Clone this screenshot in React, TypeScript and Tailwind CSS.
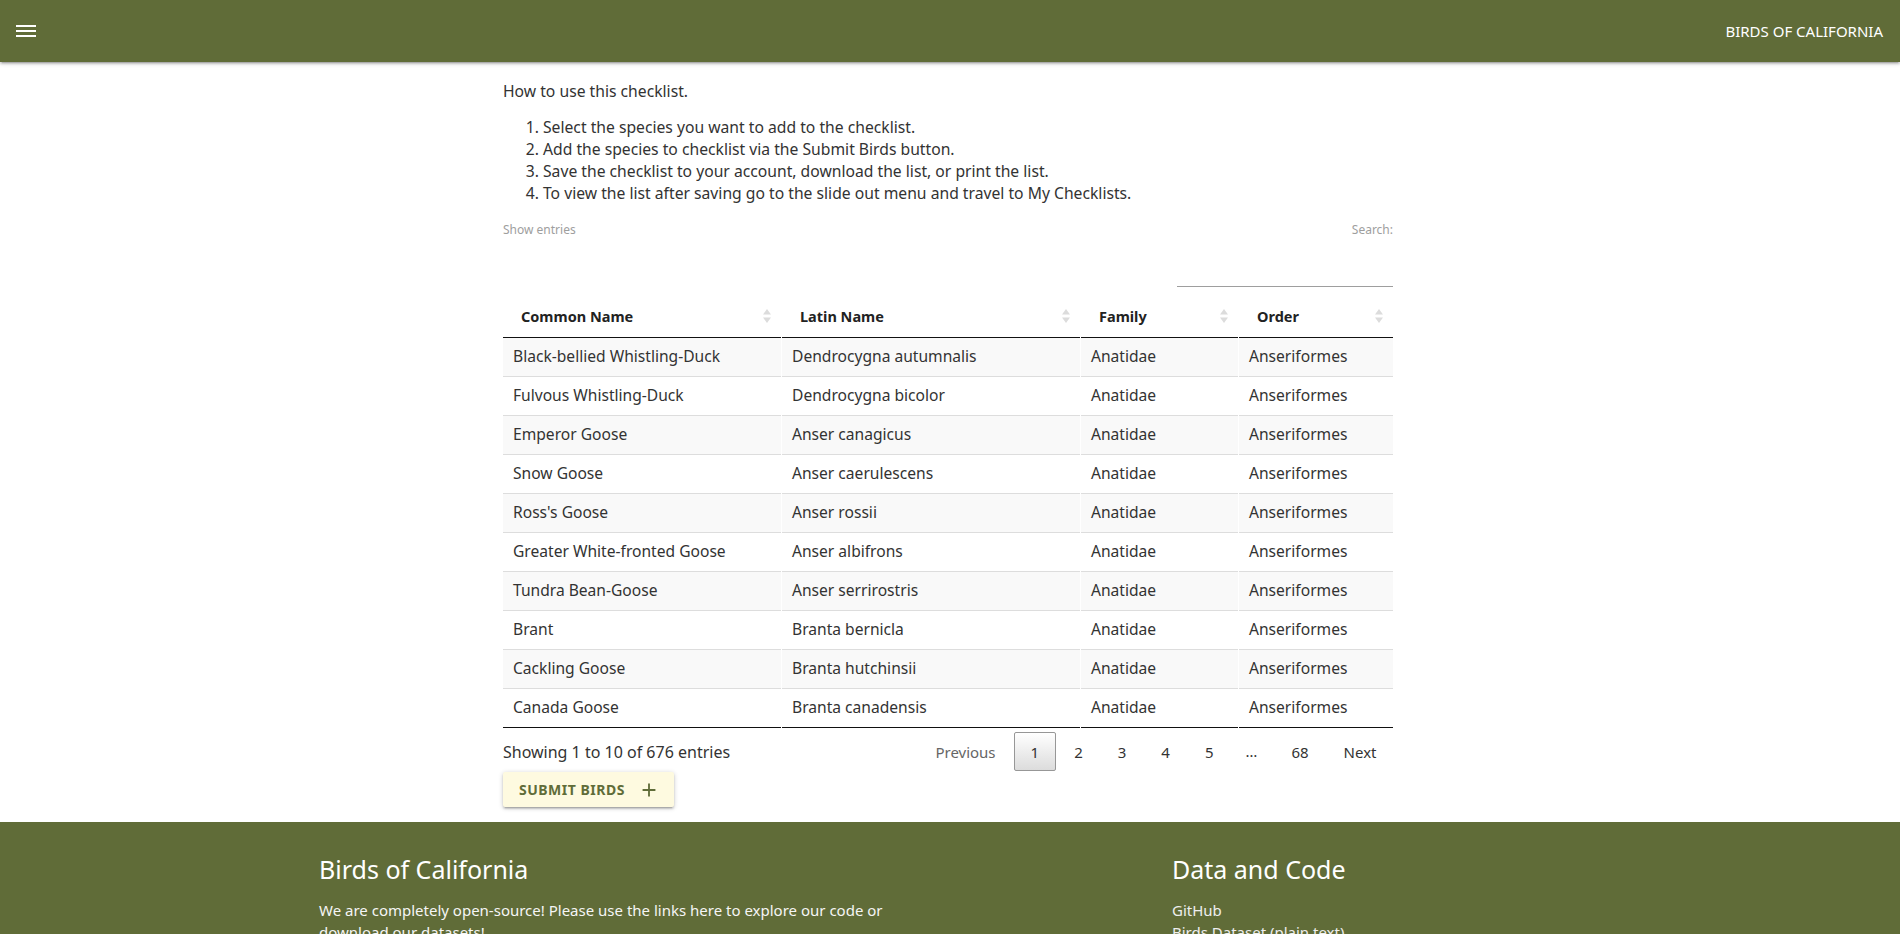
import React from "react";

const birds = [
  ["Black-bellied Whistling-Duck", "Dendrocygna autumnalis", "Anatidae", "Anseriformes"],
  ["Fulvous Whistling-Duck", "Dendrocygna bicolor", "Anatidae", "Anseriformes"],
  ["Emperor Goose", "Anser canagicus", "Anatidae", "Anseriformes"],
  ["Snow Goose", "Anser caerulescens", "Anatidae", "Anseriformes"],
  ["Ross's Goose", "Anser rossii", "Anatidae", "Anseriformes"],
  ["Greater White-fronted Goose", "Anser albifrons", "Anatidae", "Anseriformes"],
  ["Tundra Bean-Goose", "Anser serrirostris", "Anatidae", "Anseriformes"],
  ["Brant", "Branta bernicla", "Anatidae", "Anseriformes"],
  ["Cackling Goose", "Branta hutchinsii", "Anatidae", "Anseriformes"],
  ["Canada Goose", "Branta canadensis", "Anatidae", "Anseriformes"],
];

const headers = ["Common Name", "Latin Name", "Family", "Order"];

function SortIcon() {
  return (
    <svg width="8" height="14" viewBox="0 0 8 14" className="shrink-0">
      <polygon points="4,0 8,5.5 0,5.5" fill="#dcdcdc" />
      <polygon points="0,8.5 8,8.5 4,14" fill="#dcdcdc" />
    </svg>
  );
}

function PageButton({ label, current = false, muted = false }: { label: string; current?: boolean; muted?: boolean }) {
  return (
    <span
      className={`ml-[2px] inline-flex h-[39px] items-center px-[15.5px] leading-[22px] rounded-[2px] border ${
        current
          ? "border-[#979797] bg-gradient-to-b from-white to-[#dcdcdc] text-[#333]"
          : "border-transparent " + (muted ? "text-[#666]" : "text-[#333]")
      }`}
    >
      {label}
    </span>
  );
}

export default function App() {
  return (
    <div className="min-h-screen bg-white font-['Noto_Sans',_'Open_Sans',_sans-serif] text-[#333]">
      {/* top bar */}
      <nav className="relative z-10 flex h-[62px] items-center justify-between bg-[#606c38] pl-[16px] pr-[17px] shadow-[0_2px_2px_0_rgba(0,0,0,0.14),0_3px_1px_-2px_rgba(0,0,0,0.12),0_1px_5px_0_rgba(0,0,0,0.2)]">
        <svg width="20" height="12" viewBox="0 0 20 12">
          <rect x="0" y="0" width="20" height="2" fill="white" />
          <rect x="0" y="5" width="20" height="2" fill="white" />
          <rect x="0" y="10" width="20" height="2" fill="white" />
        </svg>
        <span className="text-[15px] text-white">BIRDS OF CALIFORNIA</span>
      </nav>

      <main className="ml-[503px] w-[890px] pt-[18px] pb-[15px]">
        <p className="text-[15.7px] leading-[22px]">How to use this checklist.</p>
        <ol className="mt-[14px] list-decimal pl-[40px] text-[15.7px] leading-[22px]">
          <li>Select the species you want to add to the checklist.</li>
          <li>Add the species to checklist via the Submit Birds button.</li>
          <li>Save the checklist to your account, download the list, or print the list.</li>
          <li>To view the list after saving go to the slide out menu and travel to My Checklists.</li>
        </ol>

        <div className="mt-[18px] flex items-start justify-between text-[12px] leading-[15px] text-[#9e9e9e]">
          <span>Show entries</span>
          <div className="flex flex-col items-end">
            <span>Search:</span>
            <div className="mt-[5px] h-[45px] w-[216px] border-b border-[#9e9e9e]" />
          </div>
        </div>

        {/* table */}
        <div className="mt-[8px] grid grid-cols-[278px_298px_157px_154px] gap-x-px">
          {headers.map((h) => (
            <div
              key={h}
              className="flex h-[43px] items-center justify-between border-b border-[#111] pl-[18px] pr-[10px] text-[14.5px] font-bold leading-[22px] text-[#222]"
            >
              <span>{h}</span>
              <SortIcon />
            </div>
          ))}
          {birds.map((row, i) =>
            row.map((cell, j) => (
              <div
                key={i + "-" + j}
                className={`flex h-[39px] items-center border-b px-[10px] text-[15.6px] ${
                  i === birds.length - 1 ? "border-[#111]" : "border-[#ddd]"
                } ${i % 2 === 0 ? "bg-[#f9f9f9]" : "bg-white"}`}
              >
                {cell}
              </div>
            ))
          )}
        </div>

        <div className="mt-[4px] flex items-center justify-between">
          <span className="text-[16px] leading-[22px] text-[#333]">Showing 1 to 10 of 676 entries</span>
          <div className="flex items-center text-[15px]">
            <PageButton label="Previous" muted />
            <PageButton label="1" current />
            <PageButton label="2" />
            <PageButton label="3" />
            <PageButton label="4" />
            <PageButton label="5" />
            <span className="px-[15.5px] text-[#333]">…</span>
            <PageButton label="68" />
            <PageButton label="Next" />
          </div>
        </div>

        <button className="mt-[1px] flex h-[35px] items-center rounded-[2px] bg-[#fefae0] pl-[16px] pr-[14px] text-[14px] font-bold tracking-[0.5px] text-[#606c38] shadow-[0_2px_2px_0_rgba(0,0,0,0.14),0_3px_1px_-2px_rgba(0,0,0,0.12),0_1px_5px_0_rgba(0,0,0,0.2)]">
          SUBMIT BIRDS
          <svg width="22" height="22" viewBox="0 0 24 24" className="ml-[13px]">
            <path d="M19 13h-6v6h-2v-6H5v-2h6V5h2v6h6v2z" fill="#606c38" />
          </svg>
        </button>
      </main>

      <footer className="bg-[#606c38] pt-[20px] pb-[40px]">
        <div className="mx-auto flex w-[1262px]">
          <div className="w-[853px]">
            <h5 className="mt-[12px] text-[25px] leading-[31px] text-white">Birds of California</h5>
            <p className="mt-[14px] w-[620px] text-[15px] leading-[22px] text-[#f5f5f5]">
              We are completely open-source! Please use the links here to explore our code or download our datasets!
            </p>
          </div>
          <div>
            <h5 className="mt-[12px] text-[25px] leading-[31px] text-white">Data and Code</h5>
            <ul className="mt-[14px] text-[15px] leading-[22px] text-[#eeeeee]">
              <li>GitHub</li>
              <li>Birds Dataset (plain text)</li>
              <li>Birds Dataset (JSON)</li>
            </ul>
          </div>
        </div>
        <div className="mt-[30px] h-[50px] bg-[#56612f]" />
      </footer>
    </div>
  );
}
